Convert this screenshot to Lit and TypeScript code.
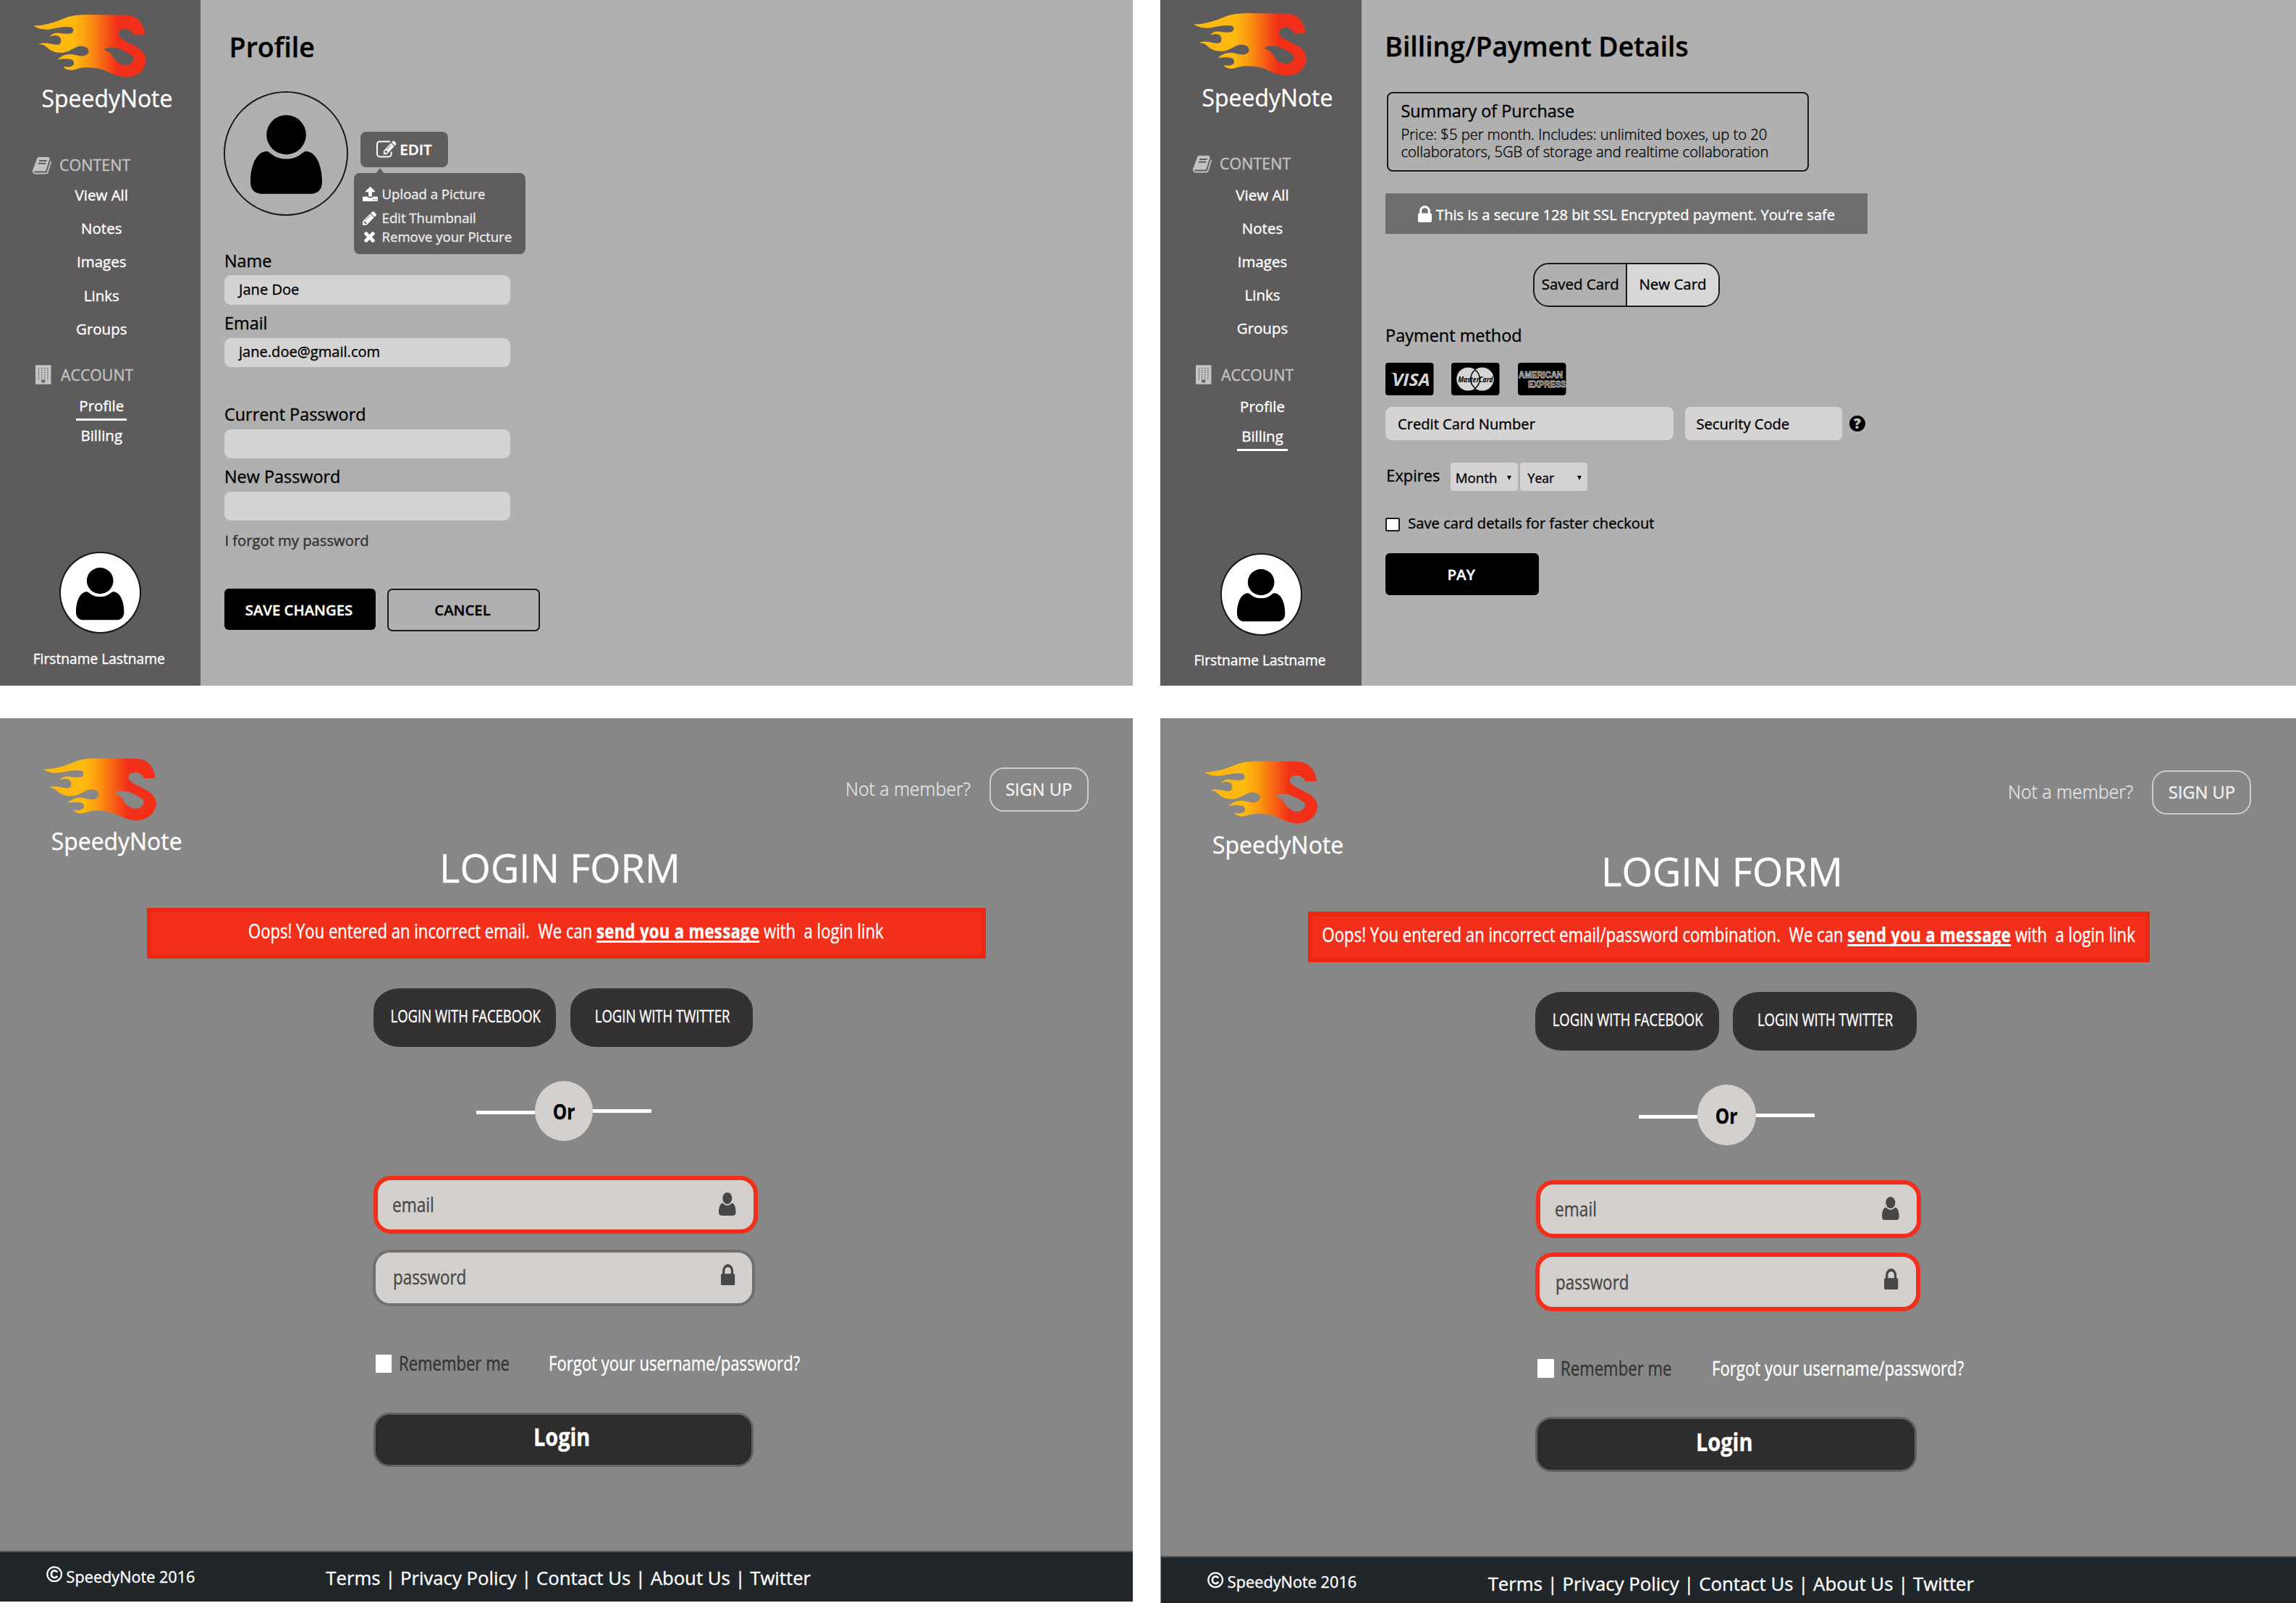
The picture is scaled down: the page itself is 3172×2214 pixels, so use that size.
import { LitElement, html, css, svg } from "lit";
import { customElement, property } from "lit/decorators.js";
import { classMap } from "lit/directives/class-map.js";

const ICONS: Record<string, { box: string; d: string }> = {
  lock: {
    box: "0 128 1152 1408",
    d: "M320 768h512v-192q0-106-75-181t-181-75-181 75-75 181v192zm832 96v576q0 40-28 68t-68 28h-960q-40 0-68-28t-28-68v-576q0-40 28-68t68-28h32v-192q0-184 132-316t316-132 316 132 132 316v192h32q40 0 68 28t28 68z",
  },
  upload: {
    box: "64 64 1664 1600",
    d: "M1344 1472q0-26-19-45t-45-19-45 19-19 45 19 45 45 19 45-19 19-45zm256 0q0-26-19-45t-45-19-45 19-19 45 19 45 45 19 45-19 19-45zm128-224v320q0 40-28 68t-68 28h-1472q-40 0-68-28t-28-68v-320q0-40 28-68t68-28h427q21 56 70.500 92t110.500 36h256q61 0 110.500-36t70.500-92h427q40 0 68 28t28 68zm-325-648q-17 40-59 40h-256v448q0 26-19 45t-45 19h-256q-26 0-45-19t-19-45v-448h-256q-42 0-59-40-17-39 14-69l448-448q18-19 45-19t45 19l448 448q31 30 14 69z",
  },
  pencil: {
    box: "128 149 1515 1515",
    d: "M491 1536l91-91-235-235-91 91v107h128v128h107zm523-928q0-22-22-22-10 0-17 7l-542 542q-7 7-7 17 0 22 22 22 10 0 17-7l542-542q7-7 7-17zm-54-192l416 416-832 832h-416v-416zm683 96q0 53-37 90l-166 166-416-416 166-165q36-38 90-38 53 0 91 38l235 234q37 39 37 91z",
  },
  times: {
    box: "302 366 1188 1188",
    d: "M1490 1322q0 40-28 68l-136 136q-28 28-68 28t-68-28l-294-294-294 294q-28 28-68 28t-68-28l-136-136q-28-28-28-68t28-68l294-294-294-294q-28-28-28-68t28-68l136-136q28-28 68-28t68 28l294 294 294-294q28-28 68-28t68 28l136 136q28 28 28 68t-28 68l-294 294 294 294q28 28 28 68z",
  },
  edit: {
    box: "0 160 1792 1376",
    d: "M888 1184l116-116-152-152-116 116v56h96v96h56zm440-720q-16-16-33 1l-350 350q-17 17-1 33t33-1l350-350q17-17 1-33zm80 594v190q0 119-84.500 203.500t-203.500 84.500h-832q-119 0-203.500-84.500t-84.500-203.500v-832q0-119 84.500-203.500t203.500-84.500h832q63 0 117 25 15 7 18 23 3 17-9 29l-49 49q-14 14-32 8-23-6-45-6h-832q-66 0-113 47t-47 113v832q0 66 47 113t113 47h832q66 0 113-47t47-113v-126q0-13 9-22l64-64q15-15 35-7t20 29zm-96-738l288 288-672 672h-288v-288zm444 132l-92 92-288-288 92-92q28-28 68-28t68 28l152 152q28 28 28 68t-28 68z",
  },
  book: {
    box: "62 128 1605 1536",
    d: "M1639 478q40 57 18 129l-275 906q-19 64-76.500 107.500t-122.500 43.500h-923q-77 0-148.500-53.500t-99.500-131.500q-24-67-2-127 0-4 3-27t4-37q1-8-3-21.500t-3-19.500q2-11 8-21t16.500-23.500 16.500-23.500q23-38 45-91.500t30-91.500q3-10 .5-30t-.5-28q3-11 17-28t17-23q21-36 42-92t25-90q1-9-2.500-32t.5-28q4-13 22-30.500t22-22.500q19-26 42.500-84.500t27.500-96.500q1-8-3-25.500t-2-26.500q2-8 9-18t18-23 17-21q8-12 16.500-30.500t15-35 16-36 19.500-32 26.500-23.500 36-11.500 47.500 5.500l-1 3q38-9 51-9h761q74 0 114 56t18 130l-274 906q-36 119-71.500 153.500t-128.500 34.500h-869q-27 0-38 15-11 16-1 43 24 70 144 70h923q29 0 56-15.500t35-41.500l300-987q7-22 5-57 38 15 59 43zm-1064 2q-4 13 2 22.500t20 9.500h608q13 0 25.500-9.500t16.500-22.500l21-64q4-13-2-22.500t-20-9.500h-608q-13 0-25.500 9.500t-16.500 22.500zm-83 256q-4 13 2 22.500t20 9.500h608q13 0 25.500-9.500t16.500-22.500l21-64q4-13-2-22.500t-20-9.500h-608q-13 0-25.500 9.500t-16.500 22.500z",
  },
};

const icon = (name: string, cls: string) => html`<svg class=${cls} viewBox=${ICONS[name].box} preserveAspectRatio="none" fill="currentColor"><path d=${ICONS[name].d}></path></svg>`;

const building = html`<svg class="building" viewBox="0 0 22 27" fill="currentColor">
  <rect width="22" height="27" rx="1"></rect>
  ${[4, 8.2, 12.4, 16.6].map((x) => [4, 7, 10, 13, 16, 19].map((y) => svg`<rect x=${x} y=${y} width="1.2" height="1.6" fill="#5d5b5c"></rect>`))}
  <rect x="8.500" y="21" width="5" height="3.600" fill="#5d5b5c"></rect>
</svg>`;

const person = (cls: string) => html`<svg class=${cls} viewBox="0 0 99 108.7" preserveAspectRatio="none" fill="currentColor">
  <ellipse cx="49.500" cy="27.200" rx="27.300" ry="27.200"></ellipse>
  <path d="M22 50C28 50 31 60.500 49.500 60.500C68 60.500 71 50 77 50C92 51 99 72 99 92C99 103 93 108.700 83 108.700H16C6 108.700 0 103 0 92C0 72 7 51 22 50Z"></path>
</svg>`;

const logo = html`<svg class="logo" viewBox="19 30 469 260.500" preserveAspectRatio="none">
  <defs>
    <linearGradient id="flame" gradientUnits="userSpaceOnUse" x1="190" y1="0" x2="370" y2="0">
      <stop offset="0" stop-color="#fdb90f"></stop>
      <stop offset="0.300" stop-color="#fb9a10"></stop>
      <stop offset="0.700" stop-color="#f65d15"></stop>
      <stop offset="1" stop-color="#f22f18"></stop>
    </linearGradient>
  </defs>
  <path fill="url(#flame)" fill-rule="evenodd" d="M20 77C70 76 110 62 150 45C182 33 215 31 250 31L400 32C442 34 462 50 475 80C480 92 483 100 483 115L437 115C430 98 415 90 403 90C380 90 368 102 374 118C380 132 410 145 440 160C470 175 487 195 487 220C485 262 450 290 405 290C365 288 345 275 320 264C300 254 270 250 230 250C205 251 192 262 168 261C155 259 147 253 143 245C155 250 180 250 187 238C190 222 182 216 165 215C145 214 130 215 120 218C132 204 150 195 175 195C190 196 205 203 222 203C240 203 250 192 249 180C247 166 230 159 208 162C185 166 165 190 130 189C100 188 85 175 75 166C65 156 55 153 40 153C55 148 75 148 90 151C105 155 122 159 132 150C137 138 135 122 118 118C108 116 98 118 87 122C95 110 110 105 125 107C140 110 160 112 178 108C189 102 188 86 175 83C155 78 120 85 95 90C60 97 35 88 20 77ZM312 176C330 165 355 165 375 172C400 182 425 195 434 205C442 218 425 241 405 241C380 241 362 225 352 208C345 192 330 184 312 176Z"></path>
</svg>`;

const copyright = html`<svg class="copy" viewBox="0 0 24 24" fill="none" stroke="currentColor">
  <circle cx="12" cy="12" r="10.600" stroke-width="2.400"></circle>
  <path d="M16.200 9.200C15.400 7.600 14 6.800 12.200 6.800C9.300 6.800 7.400 9 7.400 12C7.400 15 9.300 17.200 12.200 17.200C14 17.200 15.500 16.300 16.300 14.700" stroke-width="2.900"></path>
</svg>`;

const base = css`
  :host {
    display: block;
    box-sizing: border-box;
    font-family: "Open Sans", "Liberation Sans", sans-serif;
    white-space: nowrap;
    -webkit-text-stroke: 0.350px;
  }
  * { box-sizing: border-box; }
  svg { display: block; flex: none; overflow: visible; }
  .logo { width: 156px; height: 86.600px; }
  .brand { font-size: 31.900px; line-height: 40px; color: #fff; }
`;

@customElement("side-bar")
class SideBar extends LitElement {
  @property() active = "Profile";

  static styles = [base, css`
    :host { background: #5d5b5c; width: 276.500px; height: 100%; color: #fff; padding-top: 20px; }
    :host([active="Billing"]) { width: 278px; padding-top: 18.400px; }
    .logo { margin-left: 46.300px; }
    .brand { margin: 9.700px 0 0 57.600px; }
    .head { display: flex; align-items: center; height: 30px; font-size: 21.500px; color: #c4c3c4; margin-top: 56px; padding-left: 45.500px; }
    .head.account { font-size: 21.300px; margin-top: 25.600px; padding-left: 49px; }
    .book { width: 25px; height: 23.500px; margin-right: 11.500px; position: relative; top: 1px; }
    .building { width: 21.500px; height: 27px; margin-right: 13.500px; }
    .nav { display: flex; flex-direction: column; align-items: center; margin-top: 3.900px; padding-left: 4px; font-size: 20.500px; line-height: 46.150px; }
    .nav.account { margin-top: 7.200px; line-height: 41px; }
    .item { position: relative; width: 70px; display: flex; justify-content: center; }
    .on::after { content: ""; position: absolute; left: 0; right: 0; top: 38.200px; height: 3px; background: #fff; }
    .avatar { width: 113px; height: 113.500px; border: 2px solid #161616; border-radius: 50%; background: #fff; color: #000; margin: 140.200px auto 0; display: flex; justify-content: center; padding-top: 20px; }
    .person { width: 66.400px; height: 72.300px; }
    .who { margin: 19.800px 0 0 -3px; text-align: center; font-size: 19.200px; line-height: 30px; }
    :host([active="Billing"]) .nav { margin-top: 5.200px; }
    :host([active="Billing"]) .nav.account { margin-top: 8px; }
    :host([active="Billing"]) .avatar { margin-top: 141.500px; }
    :host([active="Billing"]) .who { margin-top: 19.500px; }
    :host([active="Billing"]) .head.account { margin-top: 26px; }
    :host([active="Billing"]) .on::after { top: 38.800px; }
  `];

  item(label: string) {
    return html`<div class=${classMap({ item: true, on: label === this.active })}>${label}</div>`;
  }

  render() {
    return html`
      ${logo}
      <div class="brand">SpeedyNote</div>
      <div class="head">${icon("book", "book")}CONTENT</div>
      <div class="nav">${["View All", "Notes", "Images", "Links", "Groups"].map((n) => this.item(n))}</div>
      <div class="head account">${building}ACCOUNT</div>
      <div class="nav account">${["Profile", "Billing"].map((n) => this.item(n))}</div>
      <div class="avatar">${person("person")}</div>
      <div class="who">Firstname Lastname</div>
    `;
  }
}

@customElement("profile-page")
class ProfilePage extends LitElement {
  static styles = [base, css`
    :host { display: flex; height: 946.700px; background: #b0b0b0; color: #000; }
    .main { flex: 1; padding: 40.200px 0 0 33.500px; }
    .title { font-size: 37.500px; font-weight: 600; line-height: 50px; margin-left: 6.600px; }
    .row { display: flex; align-items: flex-start; margin-top: 35.800px; }
    .avatar { width: 172px; height: 172px; margin-left: -1px; border: 2px solid #1a1a1a; border-radius: 50%; display: flex; justify-content: center; padding-top: 31px; }
    .person { width: 99px; height: 108.700px; }
    .edit { position: relative; margin: 56px 0 0 17.300px; width: 121px; height: 48.700px; border-radius: 8px; background: #5f5d5e; color: #fff; display: flex; align-items: center; padding: 0 0 0 22px; font-size: 20.500px; font-weight: 600; }
    .edit-icon { width: 27.500px; height: 22.500px; margin-right: 4.500px; }
    .menu { position: absolute; left: -9.700px; top: 57.300px; width: 237.700px; height: 111.700px; border-radius: 8px; background: #5f5d5e; padding: 15px 0 0 12px; font-size: 18.550px; font-weight: 400; color: #ececec; }
    .menu::before { content: ""; position: absolute; left: 30.500px; top: -7px; border: 6.500px solid transparent; border-top: 0; border-bottom: 8px solid #5f5d5e; }
    .opt { display: flex; align-items: center; height: 28px; line-height: 28px; color: #ececec; }
    .opt + .opt { height: 30.500px; padding-top: 7px; }
    .opt + .opt + .opt { height: 28px; padding-top: 1px; }
    .cell { width: 27px; display: flex; color: #fff; }
    .upload { width: 21px; height: 20px; }
    .pencil { width: 19px; height: 19px; }
    .times { width: 15px; height: 15px; margin-left: 2px; }
    .label { font-size: 23.400px; line-height: 32px; margin-top: 9.300px; }
    .label.first { margin-top: 45.600px; }
    .label.gap { margin-top: 49.100px; }
    .field { width: 395px; height: 40.300px; margin-top: 4.700px; border-radius: 9px; background: #d5d3d4; font-size: 20.100px; display: flex; align-items: center; padding: 0 0 2.600px 20px; }
    .forgot { margin: 12.800px 0 0 0.400px; font-size: 20.230px; line-height: 28px; color: #303030; }
    .buttons { display: flex; gap: 16px; margin-top: 52.900px; font-size: 20.300px; font-weight: 600; }
    .btn { width: 209px; height: 57.500px; border-radius: 6px; background: #000; color: #fff; display: flex; align-items: center; justify-content: center; padding: 1.500px 3px 0 0; }
    .btn.ghost { width: 211px; height: 58.700px; border: 2.500px solid #1a1a1a; border-radius: 7px; background: none; color: #000; padding-top: 0; }
  `];

  render() {
    return html`
      <side-bar active="Profile"></side-bar>
      <div class="main">
        <div class="title">Profile</div>
        <div class="row">
          <div class="avatar">${person("person")}</div>
          <div class="edit">
            ${icon("edit", "edit-icon")}<span>EDIT</span>
            <div class="menu">
              <div class="opt"><span class="cell">${icon("upload", "upload")}</span>Upload a Picture</div>
              <div class="opt"><span class="cell">${icon("pencil", "pencil")}</span>Edit Thumbnail</div>
              <div class="opt"><span class="cell">${icon("times", "times")}</span>Remove your Picture</div>
            </div>
          </div>
        </div>
        <div class="label first">Name</div>
        <div class="field">Jane Doe</div>
        <div class="label">Email</div>
        <div class="field">jane.doe@gmail.com</div>
        <div class="label gap">Current Password</div>
        <div class="field"></div>
        <div class="label">New Password</div>
        <div class="field"></div>
        <div class="forgot">I forgot my password</div>
        <div class="buttons"><div class="btn">SAVE CHANGES</div><div class="btn ghost">CANCEL</div></div>
      </div>
    `;
  }
}

@customElement("billing-page")
class BillingPage extends LitElement {
  static styles = [base, css`
    :host { display: flex; height: 946.700px; background: #b0b0b0; color: #000; }
    .main { flex: 1; padding: 38.500px 0 0 33.300px; }
    .title { font-size: 37.350px; font-weight: 600; line-height: 50px; margin-left: -1px; }
    .summary { width: 583.300px; height: 109.500px; margin: 38.500px 0 0 1.300px; border: 2.500px solid #1a1a1a; border-radius: 8px; padding: 8.500px 0 0 17.800px; }
    .heading { font-size: 23.400px; line-height: 30px; }
    .text { font-size: 20.200px; font-weight: 300; line-height: 24px; margin-top: 5.800px; }
    .secure { width: 665.600px; height: 55.700px; margin-top: 30.600px; background: #6e6e6e; color: #fff; display: flex; align-items: center; padding: 2px 0 0 44.500px; font-size: 20.150px; }
    .lock { width: 19px; height: 23px; margin-right: 6.300px; }
    .toggle { display: flex; width: 257.500px; height: 60.400px; margin: 40.600px 0 0 204px; border: 2.500px solid #1a1a1a; border-radius: 22px; overflow: hidden; font-size: 20.450px; }
    .side { width: 126px; display: flex; align-items: center; justify-content: center; padding-bottom: 3px; }
    .side.on { flex: 1; background: #d9d6d6; border-left: 2px solid #1a1a1a; }
    .label { font-size: 23.450px; line-height: 32px; margin: 23.200px 0 0 -0.200px; }
    .cards { display: flex; gap: 25.100px; margin: 21.600px 0 0 -0.800px; }
    .card { width: 66.500px; height: 45px; -webkit-text-stroke: 0; }
    .inputs { display: flex; align-items: center; margin-top: 16.200px; }
    .field { height: 46.400px; border-radius: 9px; background: #d5d3d4; font-size: 20.160px; display: flex; align-items: center; padding-left: 16.700px; padding-bottom: 0.600px; }
    .number { width: 398px; }
    .code { width: 216.700px; margin-left: 15.900px; padding-left: 15.300px; border-radius: 7px; }
    .help { width: 22.500px; height: 22.500px; border-radius: 50%; background: #000; color: #c4c4c4; margin-left: 9.700px; font-size: 18.500px; font-weight: 800; display: flex; align-items: center; justify-content: center; }
    .expires { display: flex; align-items: center; height: 39px; margin: 31px 0 0 1px; }
    .exp { width: 88.300px; font-size: 21.850px; padding-bottom: 3.600px; }
    .select { display: flex; align-items: center; height: 39px; border-radius: 4px; background: #d5d3d4; width: 93px; font-size: 18.700px; padding: 2.500px 0 0 7.200px; margin-right: 3.800px; position: relative; }
    .select.year { font-size: 17.600px; padding-left: 10.200px; }
    .select::after { content: ""; position: absolute; right: 9px; top: 17.500px; border: 3px solid transparent; border-top: 6px solid #000; border-bottom: 0; }
    .select.year::after { right: 8px; }
    .save { display: flex; align-items: center; height: 28px; margin-top: 30.300px; font-size: 20.200px; }
    .check { width: 19.300px; height: 19.300px; border: 2.500px solid #1a1a1a; border-radius: 2px; background: #fff; margin-right: 11.600px; position: relative; top: 1.800px; }
    .pay { width: 211.700px; height: 57.600px; margin-top: 27.600px; border-radius: 6px; background: #000; color: #fff; font-size: 20.600px; font-weight: 600; display: flex; align-items: center; justify-content: center; padding: 1px 3px 0 0; }
    .visa { font: 700 24px "Open Sans", sans-serif; font-style: italic; }
    .mc { font: italic 700 11px "Open Sans", sans-serif; }
    .amex { font: 700 12.500px "Liberation Sans", sans-serif; }
  `];

  render() {
    return html`
      <side-bar active="Billing"></side-bar>
      <div class="main">
        <div class="title">Billing/Payment Details</div>
        <div class="summary">
          <div class="heading">Summary of Purchase</div>
          <div class="text">Price: $5 per month. Includes: unlimited boxes, up to 20<br />collaborators, 5GB of storage and realtime collaboration</div>
        </div>
        <div class="secure">${icon("lock", "lock")}This is a secure 128 bit SSL Encrypted payment. You’re safe</div>
        <div class="toggle"><div class="side">Saved Card</div><div class="side on">New Card</div></div>
        <div class="label">Payment method</div>
        <div class="cards">
          <svg class="card" viewBox="0 0 66.500 45">
            <rect width="66.500" height="45" rx="4"></rect>
            <text class="visa" x="9.500" y="31.500" textLength="52" lengthAdjust="spacingAndGlyphs" fill="#d6d6d6">VISA</text>
            <path d="M7 13.500L14.500 14.200L13.500 19C12 16 10 14.300 7 13.500Z" fill="#d6d6d6"></path>
          </svg>
          <svg class="card" viewBox="0 0 66.500 45">
            <rect width="66.500" height="45" rx="4"></rect>
            <circle cx="23.300" cy="22.600" r="16" fill="#d6d6d6"></circle>
            <circle cx="42.700" cy="22.600" r="16" fill="#d6d6d6"></circle>
            <path d="M33 9.900A16 16 0 0 1 33 35.300M33 9.900A16 16 0 0 0 33 35.300" fill="none" stroke="#000" stroke-width="1.500"></path>
            <text class="mc" x="9.500" y="26.500" textLength="48" lengthAdjust="spacingAndGlyphs">MasterCard</text>
          </svg>
          <svg class="card" viewBox="0 0 66.500 45">
            <rect width="66.500" height="45" rx="4"></rect>
            <text class="amex" x="1" y="20.500" textLength="61" lengthAdjust="spacingAndGlyphs" stroke="#c6c6c6" stroke-width="0.900">AMERICAN</text>
            <text class="amex" x="14" y="33.800" textLength="52.500" lengthAdjust="spacingAndGlyphs" stroke="#c6c6c6" stroke-width="0.900">EXPRESS</text>
          </svg>
        </div>
        <div class="inputs">
          <div class="field number">Credit Card Number</div>
          <div class="field code">Security Code</div>
          <div class="help">?</div>
        </div>
        <div class="expires"><span class="exp">Expires</span><div class="select">Month</div><div class="select year">Year</div></div>
        <div class="save"><span class="check"></span>Save card details for faster checkout</div>
        <div class="pay">PAY</div>
      </div>
    `;
  }
}

@customElement("login-page")
class LoginPage extends LitElement {
  @property() message = "";
  @property({ type: Boolean }) both = false;

  static styles = [base, css`
    :host { display: flex; flex-direction: column; height: 1219.800px; background: #878788; color: #fff; }
    :host([both]) { zoom: 1.003; padding: 4px 0 0 1px; height: 1218.400px; }
    .top { display: flex; justify-content: space-between; height: 171.200px; padding: 0 61.500px 0 59.500px; }
    .top, .title, .error, .social, .or, .field, .remember, .login { flex: none; }
    .logo { margin-top: 54.500px; height: 86.200px; }
    .brand { margin: 9.600px 0 0 11.300px; }
    .join { display: flex; align-items: center; height: 61px; margin-top: 67.700px; }
    .member { font-size: 24.850px; font-weight: 300; color: #e6e6e6; margin-right: 25.800px; padding-bottom: 2.500px; }
    .signup { width: 136.700px; height: 61px; border: 2.500px solid #cdcdcd; border-radius: 20px; display: flex; align-items: center; justify-content: center; font-size: 23.600px; color: #f2f2f2; padding-bottom: 1px; }
    .title { font-size: 54.300px; line-height: 70px; text-align: center; padding-right: 18px; }
    .error { width: 1159px; height: 69.700px; margin: 21.100px 0 0 202.700px; background: #f22f1a; border: 6px solid #ec2813; display: flex; align-items: center; justify-content: center; padding-bottom: 5.400px; }
    .cond { display: block; flex: none; white-space: pre; transform: scaleX(0.833); font-size: 26.500px; }
    .left { transform-origin: left center; }
    .link { font-weight: 700; letter-spacing: 0.400px; text-decoration: underline; text-decoration-thickness: 2.500px; text-underline-offset: 3px; text-decoration-skip-ink: none; }
    .social { display: flex; gap: 19.800px; margin: 41px 0 0 515.800px; }
    .provider { width: 252.400px; height: 80.700px; border-radius: 37px / 30px; background: #343132; display: flex; align-items: center; justify-content: center; padding: 0 0 5px 2px; }
    .provider .cond { font-size: 23.400px; transform: scaleX(0.79); }
    .or { display: flex; align-items: center; margin: 47.300px 0 0 657.700px; }
    .line { width: 81px; height: 5px; background: #fff; position: relative; top: 2px; }
    .line.right { top: 0.300px; }
    .disc { width: 80.800px; height: 83.400px; border-radius: 50%; background: #d4d0cd; color: #000; display: flex; align-items: center; justify-content: center; }
    .disc .cond { font-size: 28.800px; font-weight: 700; transform: scaleX(0.85); }
    .field { width: 530.800px; height: 80px; margin: 47.600px 0 0 516.200px; border: 6px solid #f0301a; border-radius: 24px; background: #d4d0cd; color: #474747; display: flex; align-items: center; justify-content: space-between; padding: 0 24px 1px 20.300px; }
    .field .cond { font-size: 28px; transform: scaleX(0.81); }
    .field.pass { width: 527.700px; height: 78px; margin: 21.700px 0 0 515.300px; border: 4px solid #707070; padding: 0 22.700px 3px 23.400px; }
    .field.pass.bad { width: 529.800px; height: 80px; margin: 20.200px 0 -0.500px 515.800px; border: 6px solid #f0301a; padding: 0 22.700px 1.500px 21.200px; }
    .pass .cond { font-size: 27.700px; }
    .user { width: 23.600px; height: 32px; }
    .lock { width: 19.200px; height: 29px; margin-right: 1.500px; position: relative; top: -2.700px; }
    .remember { display: grid; grid-template-columns: 32px 207.600px auto; align-items: center; height: 36px; line-height: 36px; margin: 61.600px 0 0 518.800px; }
    .remember .cond { font-size: 27.300px; transform: scaleX(0.81); }
    .dark { color: #333; }
    .box { width: 22.300px; height: 25.400px; background: #fff; }
    .login { width: 525.300px; height: 75px; margin: 49.300px 0 0 515.700px; border: 3px solid #626262; border-radius: 22px; background: #2e2d2d; display: flex; align-items: center; justify-content: center; padding: 0 4.500px 7.800px 0; }
    .login .cond { font-size: 34px; font-weight: 700; transform: scaleX(0.85); }
    .footer { margin-top: 116px; flex: 1 1 0; min-height: 0; background: #202629; border-top: 2px solid #505354; display: flex; align-items: flex-start; }
    .owner { display: flex; align-items: center; height: 67px; width: 386px; margin-left: 64.300px; font-size: 21.670px; }
    .copy { width: 22.300px; height: 22.300px; margin: -13px 5px 0 0; position: relative; top: 4px; }
    .links { display: flex; align-items: center; height: 67px; padding-top: 4px; font-size: 25.720px; }
  `];

  render() {
    return html`
      <div class="top">
        <div>${logo}<div class="brand">SpeedyNote</div></div>
        <div class="join"><span class="member">Not a member?</span><div class="signup">SIGN UP</div></div>
      </div>
      <div class="title">LOGIN FORM</div>
      <div class="error"><span class="cond">${this.message}  We can <span class="link">send you a message</span> with  a login link</span></div>
      <div class="social">
        <div class="provider"><span class="cond">LOGIN WITH FACEBOOK</span></div>
        <div class="provider"><span class="cond">LOGIN WITH TWITTER</span></div>
      </div>
      <div class="or"><div class="line"></div><div class="disc"><span class="cond">Or</span></div><div class="line right"></div></div>
      <div class="field"><span class="cond left">email</span>${person("user")}</div>
      <div class=${classMap({ field: true, pass: true, bad: this.both })}><span class="cond left">password</span>${icon("lock", "lock")}</div>
      <div class="remember">
        <span class="box"></span>
        <span class="cond left dark">Remember me</span>
        <span class="cond left">Forgot your username/password?</span>
      </div>
      <div class="login"><span class="cond">Login</span></div>
      <div class="footer">
        <div class="owner">${copyright}SpeedyNote 2016</div>
        <div class="links">Terms | Privacy Policy | Contact Us | About Us | Twitter</div>
      </div>
    `;
  }
}

@customElement("app-root")
class AppRoot extends LitElement {
  static styles = css`
    :host { display: grid; grid-template-columns: 1565px 1569px; grid-template-rows: 947px 1222px; column-gap: 38px; row-gap: 45px; width: 3172px; height: 2214px; background: #fff; overflow: hidden; align-items: start; }
  `;

  render() {
    return html`
      <profile-page></profile-page>
      <billing-page></billing-page>
      <login-page message="Oops! You entered an incorrect email."></login-page>
      <login-page both message="Oops! You entered an incorrect email/password combination."></login-page>
    `;
  }
}
